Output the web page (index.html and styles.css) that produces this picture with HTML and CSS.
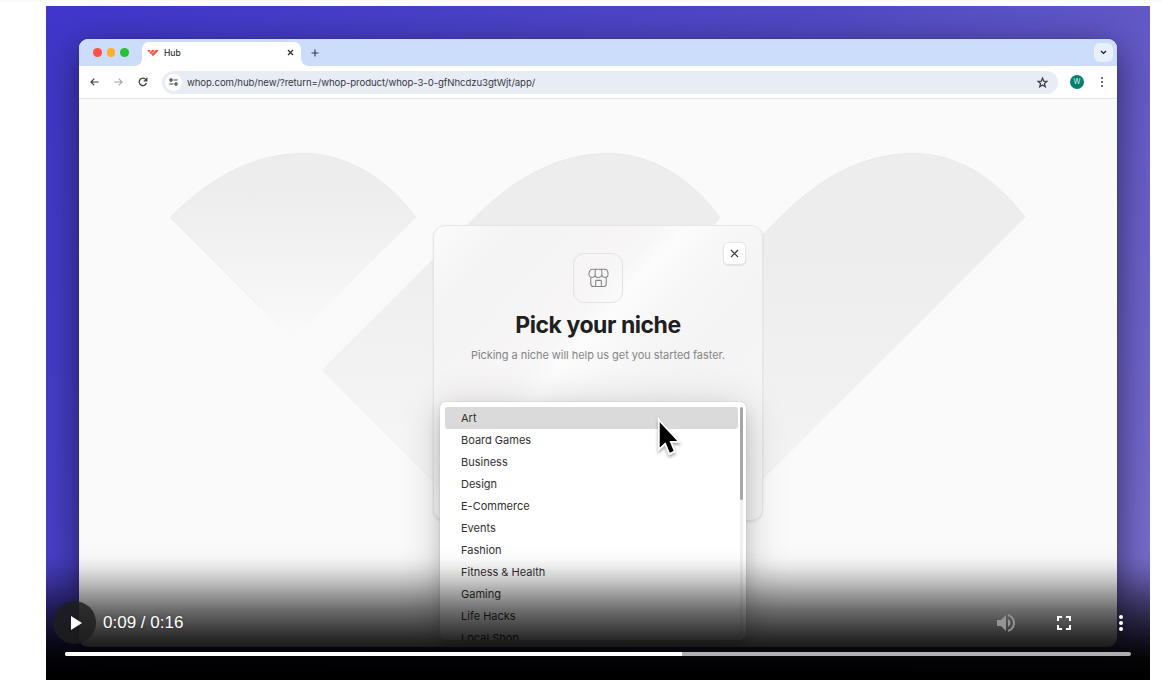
FILE: index.html
```html
<!DOCTYPE html>
<html lang="en">
  <head>
    <meta charset="UTF-8" />
    <meta name="viewport" content="width=device-width, initial-scale=1.0" />
    <title>Hub</title>
    <link rel="stylesheet" href="styles.css">
  </head>

  <body>
    <div class="video">
      <div class="window">
        <div class="tabs">
          <div class="dots">
            <span class="dot red"></span>
            <span class="dot yellow"></span>
            <span class="dot green"></span>
          </div>
          <div class="tab">
            <svg width="12" height="8" viewBox="0 0 12 8" fill="#f0523a">
              <path d="M0.3 1.5Q2 0 3.8 1.5L2 3.3Z" />
              <path d="M2.4 3.7L4.6 1.500Q6 0 7.500 1.500L3.900 5.200Z" />
              <path d="M4.300 5.500L8.300 1.500Q9.800 0 11.600 1.500L5.900 7.200Z" />
            </svg>
            <span class="tab-title">Hub</span>
            <svg width="7" height="7" viewBox="0 0 7 7" stroke="#2b2d31" stroke-width="1.2">
              <path d="M1 1L6 6M6 1L1 6" />
            </svg>
          </div>
          <svg class="plus" width="8" height="8" viewBox="0 0 8 8" stroke="#3b3f46" stroke-width="1.2">
            <path d="M4 0.5V7.5M0.5 4H7.5" />
          </svg>
          <div class="tab-search">
            <svg width="7" height="5" viewBox="0 0 7 5" fill="none" stroke="#1f2227" stroke-width="1.4">
              <path d="M1 1L3.5 3.4L6 1" />
            </svg>
          </div>
        </div>

        <div class="toolbar">
          <div class="nav">
            <svg width="9" height="8" viewBox="0 0 9 8" fill="none" stroke="#3c3f43" stroke-width="1.2">
              <path d="M8.7 4H1M4.3 0.6L0.9 4L4.3 7.4" />
            </svg>
            <svg width="9" height="8" viewBox="0 0 9 8" fill="none" stroke="#a3a5a8" stroke-width="1.1">
              <path d="M0.3 4H8M4.7 0.6L8.1 4L4.7 7.4" />
            </svg>
            <svg width="10" height="10" viewBox="0 0 10 10" fill="none" stroke="#3c3f43" stroke-width="1.3">
              <path d="M8.4 6A3.7 3.7 0 1 1 7.8 2.6L8.6 3.6M8.8 0.8V3.9H5.7" />
            </svg>
          </div>
          <div class="address">
            <span class="site">
              <svg width="9" height="8" viewBox="0 0 9 8" fill="none" stroke="#3c3f43" stroke-width="1.2">
                <path d="M4.6 2H8.6M0.4 6H4.4" />
                <circle cx="2" cy="2" r="1.1" />
                <circle cx="7" cy="6" r="1.1" />
              </svg>
            </span>
            <span class="url">whop.com/hub/new/?return=/whop-product/whop-3-0-gfNhcdzu3gtWjt/app/</span>
            <svg class="star" width="11" height="11" viewBox="0 0 12 12" fill="none" stroke="#3c3f43" stroke-width="1.4">
              <path d="M6 1.2L7.3 4.5L10.8 4.8L8.1 7.1L9 10.6L6 8.7L3 10.6L3.9 7.1L1.2 4.8L4.7 4.5Z" />
            </svg>
          </div>
          <span class="avatar">W</span>
          <svg width="4" height="12" viewBox="0 0 4 12" fill="#3c3f43">
            <circle cx="2" cy="2" r="1" />
            <circle cx="2" cy="6" r="1" />
            <circle cx="2" cy="10" r="1" />
          </svg>
        </div>

        <div class="page">
          <svg class="wings" width="1038" height="548" viewBox="79 99 1038 548" stroke-width="1">
            <defs>
              <linearGradient id="g1" gradientUnits="userSpaceOnUse" x1="0" y1="153" x2="0" y2="340">
                <stop offset="0.2" stop-color="#ededed" />
                <stop offset="1" stop-color="#fafafa" />
              </linearGradient>
              <linearGradient id="g2" gradientUnits="userSpaceOnUse" x1="0" y1="153" x2="0" y2="520">
                <stop offset="0.2" stop-color="#ededed" />
                <stop offset="1" stop-color="#f8f8f8" />
              </linearGradient>
              <linearGradient id="g3" gradientUnits="userSpaceOnUse" x1="0" y1="153" x2="0" y2="620">
                <stop offset="0.2" stop-color="#ededed" />
                <stop offset="1" stop-color="#f7f7f7" />
              </linearGradient>
              <linearGradient id="line" gradientUnits="userSpaceOnUse" x1="0" y1="153" x2="0" y2="500">
                <stop offset="0" stop-color="#e8e8e8" />
                <stop offset="1" stop-color="#f3f3f3" />
              </linearGradient>
            </defs>
            <path fill="url(#g1)" d="M170 217.500C212 175 257 153.500 303 153.500C350 153.500 390 182 416 217.500L293 340Z" />
            <path fill="none" stroke="url(#line)" d="M260 307L170.500 217.500C212 175 257 153.500 303 153.500C350 153.500 390 182 415.500 217" />
            <path fill="url(#g2)" stroke="url(#line)" d="M322.500 370L475 217.500C517 175 562 153.500 608 153.500C655 153.500 694 182 720 217.500L471 519Z" />
            <path fill="url(#g3)" d="M475 522L780 217.500C822 175 867 153.500 913 153.500C960 153.500 999 182 1025 217.500L624 618L530 575Z" />
            <path fill="none" stroke="url(#line)" d="M740 257L780 217.500C822 175 867 153.500 913 153.500C960 153.500 999 182 1025 217" />
          </svg>

          <div class="card">
            <button class="close">
              <svg width="9" height="9" viewBox="0 0 9 9" stroke="#333" stroke-width="1.1">
                <path d="M1 1L8 8M8 1L1 8" />
              </svg>
            </button>
            <div class="shop">
              <svg width="21" height="20" viewBox="0 0 22 20" fill="none" stroke="#858585" stroke-width="1.1" stroke-linejoin="round">
                <path d="M4.500 0.800H17.500C20 0.800 21 3.800 21 6A3.100 3.100 0 0 1 14.500 6A3.400 3.400 0 0 1 7.500 6A3.100 3.100 0 0 1 1 6C1 3.800 2 0.800 4.500 0.800ZM7.500 6V3Q7.500 0.800 9 0.800M14.500 6V3Q14.500 0.800 13 0.800" />
                <path d="M2.900 9V16Q2.900 19 5.900 19H16.100Q19.100 19 19.100 16V9M8 19V13.500Q8 12.500 9 12.500H13Q14 12.500 14 13.500V19" />
              </svg>
            </div>
            <h1>Pick your niche</h1>
            <p>Picking a niche will help us get you started faster.</p>

            <div class="menu">
              <ul class="list">
                <li class="active">Art</li>
                <li>Board Games</li>
                <li>Business</li>
                <li>Design</li>
                <li>E-Commerce</li>
                <li>Events</li>
                <li>Fashion</li>
                <li>Fitness &amp; Health</li>
                <li>Gaming</li>
                <li>Life Hacks</li>
                <li>Local Shop</li>
              </ul>
              <div class="scroll"><div class="thumb"></div></div>
            </div>
          </div>
        </div>
      </div>

      <svg class="cursor" width="28" height="41" viewBox="0 0 30 42" preserveAspectRatio="none">
        <path d="M3 3V33.500L9.800 27.500L14.300 38L20.200 35.300L16 25.500H25Z" fill="#000" stroke="#fff" stroke-width="2" />
      </svg>

      <div class="controls">
        <div class="row">
          <button class="play">
            <svg width="12" height="14" viewBox="0 0 12 14" fill="#fff"><path d="M0 0L11 7L0 14Z" /></svg>
          </button>
          <span class="time">0:09 / 0:16</span>
          <svg class="volume" width="18" height="18" viewBox="0 0 18 18" fill="#939393">
            <path d="M0 6V12H4L9 17V1L4 6ZM11 5Q13.500 6.500 13.500 9T11 13ZM11 0.200V2.100C14 3 16 5.700 16 9S14 15 11 15.900V17.800C15 16.900 18 13.300 18 9S15 1.100 11 0.200Z" />
          </svg>
          <svg class="full" width="14" height="14" viewBox="0 0 14 14" fill="none" stroke="#fff" stroke-width="2">
            <path d="M1 5V1H5M9 1H13V5M13 9V13H9M5 13H1V9" />
          </svg>
          <svg width="4" height="16" viewBox="0 0 4 16" fill="#fff">
            <circle cx="2" cy="2" r="2" />
            <circle cx="2" cy="8" r="2" />
            <circle cx="2" cy="14" r="2" />
          </svg>
        </div>
        <div class="timeline"><div class="played"></div></div>
      </div>
    </div>
  </body>
</html>
```
FILE: styles.css
```css
* {
  box-sizing: border-box;
}

body {
  margin: 0;
  padding: 6px 12px 8px 46px;
  background: linear-gradient(#f8f8f8, #fff 3px) no-repeat;
  font-family: Inter, "Liberation Sans", sans-serif;
}

svg {
  display: block;
  flex: none;
}

button {
  display: flex;
  align-items: center;
  justify-content: center;
  padding: 0;
  border: 0;
}

.video {
  position: relative;
  height: 674px;
  padding: 33px 33px 0;
  overflow: hidden;
  background: linear-gradient(125deg, #4036cb 0%, #5149c4 50%, #7a70cc 100%);
}

.window {
  height: 608px;
  border-radius: 9px;
  overflow: hidden;
  background: #fafafa;
  box-shadow: 0 10px 36px rgba(20, 15, 40, 0.68), 0 0 1px rgba(0, 0, 0, 0.5);
}

.tabs {
  display: flex;
  align-items: center;
  height: 27px;
  padding: 0 4px 0 14px;
  background: #ccddfb;
}

.dots {
  display: flex;
  gap: 5px;
  width: 49px;
}

.dot {
  width: 8.7px;
  height: 8.7px;
  border-radius: 50%;
}

.red {
  background: #fb5149;
}

.yellow {
  background: #fdb225;
}

.green {
  background: #25c138;
}

.tab {
  position: relative;
  display: flex;
  align-items: center;
  align-self: flex-end;
  width: 159px;
  height: 24px;
  padding: 0 7px 3px 5px;
  border-radius: 7px 7px 0 0;
  background: #fff;
}

/* flared feet of the tab */
.tab::before,
.tab::after {
  content: "";
  position: absolute;
  bottom: 0;
  width: 7px;
  height: 7px;
}

.tab::before {
  left: -7px;
  background: radial-gradient(circle at 0 0, transparent 6.5px, #fff 7px);
}

.tab::after {
  right: -7px;
  background: radial-gradient(circle at 100% 0, transparent 6.5px, #fff 7px);
}

.tab-title {
  flex: 1;
  margin-left: 5px;
  color: #2f3135;
  font-size: 8.5px;
  font-weight: 500;
}

.plus {
  margin-left: 10px;
}

.tab-search {
  display: flex;
  align-items: center;
  justify-content: center;
  width: 19px;
  height: 19px;
  margin-left: auto;
  border-radius: 6px;
  background: #e8effd;
}

.toolbar {
  display: flex;
  align-items: center;
  height: 33px;
  padding: 0 13px 0 11px;
  border-bottom: 1px solid #e3e4e6;
  background: #fff;
}

.nav {
  display: flex;
  align-items: center;
  gap: 15px;
  width: 72px;
}

.address {
  display: flex;
  align-items: center;
  flex: 1;
  height: 23px;
  padding: 0 10px 0 3px;
  border-radius: 12px;
  background: #e8ecf5;
}

.site {
  display: flex;
  align-items: center;
  justify-content: center;
  width: 17px;
  height: 17px;
  border-radius: 50%;
  background: #fff;
}

.url {
  margin-left: 5px;
  color: #37393d;
  font-size: 9.6px;
  letter-spacing: -0.075px;
  white-space: nowrap;
}

.star {
  margin-left: auto;
}

.avatar {
  width: 14px;
  height: 14px;
  margin: 0 16px 0 12px;
  border-radius: 50%;
  background: #078071;
  color: #d9f0ec;
  font-size: 7px;
  line-height: 14px;
  text-align: center;
}

.page {
  position: relative;
  display: flex;
  justify-content: center;
  height: 548px;
  padding-top: 126px;
}

.wings {
  position: absolute;
  top: 0;
  left: 0;
}

.card {
  position: relative;
  display: flex;
  flex-direction: column;
  align-items: center;
  width: 330px;
  height: 296px;
  padding-top: 27px;
  border: 1px solid #e6e6e6;
  border-radius: 12px;
  background: linear-gradient(132deg, #fbfbfb 0%, #f4f4f4 14%, #f7f5f6 34%, #f8f7f8 38%, #fcfcfc 43%, #f8f7f8 51%, #f4f4f4 64%, #f8f6f7 100%);
  box-shadow: 0 1px 2px rgba(0, 0, 0, 0.1);
}

.close {
  position: absolute;
  top: 16px;
  right: 16px;
  width: 23px;
  height: 23px;
  border: 1px solid #e4e4e4;
  border-radius: 5px;
  background: #fff;
  box-shadow: 0 1px 1px rgba(0, 0, 0, 0.08);
}

.shop {
  display: flex;
  align-items: center;
  justify-content: center;
  width: 50px;
  height: 50px;
  border: 1px solid #e3e3e3;
  border-radius: 11px;
}

.card h1 {
  margin: 8px 0 0;
  color: #202020;
  font-size: 23px;
  font-weight: 700;
  line-height: 28px;
  letter-spacing: -0.45px;
}

.card p {
  margin: 8px 0 0;
  color: #858585;
  font-size: 11px;
  line-height: 16px;
  letter-spacing: -0.05px;
  white-space: nowrap;
}

.menu {
  position: absolute;
  top: 176px;
  left: 6px;
  display: flex;
  width: 306px;
  height: 238px;
  padding: 5px 3px 0 5px;
  border-radius: 5px;
  overflow: hidden;
  background: #fff;
  box-shadow: 0 0 1px rgba(0, 0, 0, 0.35), 0 8px 40px rgba(0, 0, 0, 0.22), 0 8px 14px rgba(0, 0, 0, 0.1);
}

.list {
  flex: 1;
  margin: 0 2px 0 0;
  padding: 0;
  list-style: none;
}

.list li {
  height: 22px;
  padding-left: 16px;
  border-radius: 3px;
  color: #303030;
  font-size: 11px;
  line-height: 22px;
}

.list .active {
  background: #dadada;
}

.scroll {
  width: 3px;
  height: 228px;
  border-radius: 2px;
  background: #f0f0f0;
}

.thumb {
  height: 93px;
  border-radius: 2px;
  background: #a6a6a6;
}

.cursor {
  position: absolute;
  top: 411px;
  left: 610px;
  filter: drop-shadow(0 2px 1.5px rgba(0, 0, 0, 0.35));
}

.controls {
  position: absolute;
  right: 0;
  bottom: 0;
  left: 0;
  height: 146px;
  padding: 67px 19px 0 8px;
  background: linear-gradient(
    rgba(0, 0, 0, 0) 12px,
    rgba(0, 0, 0, 0.02) 24px,
    rgba(0, 0, 0, 0.08) 33px,
    rgba(0, 0, 0, 0.23) 48px,
    rgba(0, 0, 0, 0.38) 60px,
    rgba(0, 0, 0, 0.57) 76px,
    rgba(0, 0, 0, 0.7) 90px,
    rgba(0, 0, 0, 0.83) 104px,
    rgba(0, 0, 0, 0.89) 113px,
    rgba(0, 0, 0, 0.96) 124px,
    #000 140px
  );
}

.row {
  display: flex;
  align-items: center;
  height: 43px;
  padding-right: 8px;
}

.play {
  width: 43px;
  height: 43px;
  margin-left: -1px;
  padding-left: 4px;
  border-radius: 50%;
  background: rgba(30, 30, 30, 0.83);
}

.time {
  margin-left: 7px;
  color: #fff;
  font: 17px "Liberation Sans", Arial, sans-serif;
  text-shadow: 0 0 3px rgba(0, 0, 0, 0.4);
}

.volume {
  margin-left: auto;
}

.full {
  margin: 0 48px 0 42px;
}

.timeline {
  height: 4px;
  margin: 8px 0 0 11px;
  border-radius: 2px;
  overflow: hidden;
  background: #b0aeb0;
}

.played {
  width: 617px;
  height: 4px;
  background: #fff;
}
```
